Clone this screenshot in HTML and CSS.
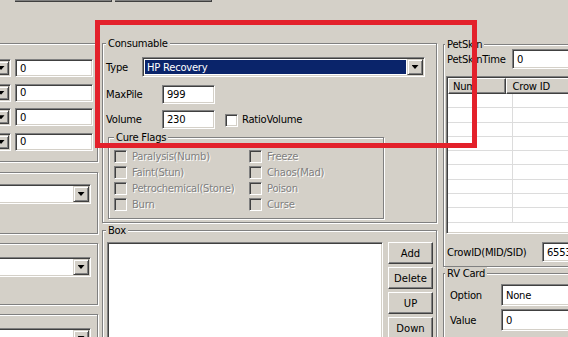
FILE: index.html
```html
<!DOCTYPE html>
<html lang="en">
<head>
	<meta charset="UTF-8">
	<title>Item Editor - Consumable</title>
	<link rel="stylesheet" href="styles.css">
</head>
<body>
	<div class="toolbar">
		<div class="tool-btn"></div>
		<div class="tool-btn"></div>
	</div>

	<div class="editor">
		<div class="col col-left">
			<div class="group group-stats">
				<div class="stat-row"><div class="combo combo-stub"><span class="combo-field"></span><span class="combo-btn"></span></div><div class="edit edit-stat">0</div></div>
				<div class="stat-row"><div class="combo combo-stub"><span class="combo-field"></span><span class="combo-btn"></span></div><div class="edit edit-stat">0</div></div>
				<div class="stat-row"><div class="combo combo-stub"><span class="combo-field"></span><span class="combo-btn"></span></div><div class="edit edit-stat">0</div></div>
				<div class="stat-row"><div class="combo combo-stub"><span class="combo-field"></span><span class="combo-btn"></span></div><div class="edit edit-stat">0</div></div>
			</div>
			<div class="group group-pick pick-first">
				<div class="combo combo-pick"><span class="combo-field"></span><span class="combo-btn"></span></div>
			</div>
			<div class="group group-pick">
				<div class="combo combo-pick"><span class="combo-field"></span><span class="combo-btn"></span></div>
			</div>
			<div class="group group-pick pick-last">
				<div class="combo combo-pick"><span class="combo-field"></span><span class="combo-btn"></span></div>
			</div>
		</div>

		<div class="col col-mid">
			<div class="group group-consumable">
				<span class="legend">Consumable</span>
				<div class="field-row row-type">
					<span class="label label-type">Type</span>
					<div class="combo combo-type"><span class="combo-field selected">HP Recovery</span><span class="combo-btn"></span></div>
				</div>
				<div class="field-row row-num">
					<span class="label label-num">MaxPile</span>
					<div class="edit edit-num">999</div>
				</div>
				<div class="field-row row-num row-volume">
					<span class="label label-num">Volume</span>
					<div class="edit edit-num">230</div>
					<span class="check check-ratio"></span>
					<span class="label">RatioVolume</span>
				</div>

				<div class="group group-cure">
					<span class="legend">Cure Flags</span>
					<div class="cure-grid">
						<div class="cure-item"><span class="check off"></span><span class="disabled">Paralysis(Numb)</span></div>
						<div class="cure-item"><span class="check off"></span><span class="disabled">Faint(Stun)</span></div>
						<div class="cure-item"><span class="check off"></span><span class="disabled">Petrochemical(Stone)</span></div>
						<div class="cure-item"><span class="check off"></span><span class="disabled">Burn</span></div>
						<div class="cure-item"><span class="check off"></span><span class="disabled">Freeze</span></div>
						<div class="cure-item"><span class="check off"></span><span class="disabled">Chaos(Mad)</span></div>
						<div class="cure-item"><span class="check off"></span><span class="disabled">Poison</span></div>
						<div class="cure-item"><span class="check off"></span><span class="disabled">Curse</span></div>
					</div>
				</div>
			</div>

			<div class="group group-box">
				<span class="legend">Box</span>
				<div class="box-body">
					<div class="listbox"></div>
					<div class="box-buttons">
						<button class="btn">Add</button>
						<button class="btn">Delete</button>
						<button class="btn">UP</button>
						<button class="btn">Down</button>
					</div>
				</div>
			</div>
		</div>

		<div class="col col-right">
			<div class="group group-petskin">
				<span class="legend">PetSkin</span>
				<div class="field-row row-skintime">
					<span class="label label-skintime">PetSkinTime</span>
					<div class="edit edit-wide">0</div>
				</div>
				<div class="listview">
					<div class="lv-header">
						<span class="lv-col lv-num">Num</span>
						<span class="lv-col lv-crow">Crow ID</span>
					</div>
					<div class="lv-rows">
						<div class="lv-row"><span></span><span></span></div>
						<div class="lv-row"><span></span><span></span></div>
						<div class="lv-row"><span></span><span></span></div>
						<div class="lv-row"><span></span><span></span></div>
						<div class="lv-row"><span></span><span></span></div>
						<div class="lv-row"><span></span><span></span></div>
						<div class="lv-row"><span></span><span></span></div>
						<div class="lv-row"><span></span><span></span></div>
						<div class="lv-row"><span></span><span></span></div>
					</div>
				</div>
				<div class="field-row row-crow">
					<span class="label label-crow">CrowID(MID/SID)</span>
					<div class="edit edit-wide">65535</div>
				</div>
			</div>

			<div class="group group-rvcard">
				<span class="legend">RV Card</span>
				<div class="field-row row-rv row-option">
					<span class="label label-rv">Option</span>
					<div class="edit edit-rv">None</div>
				</div>
				<div class="field-row row-rv">
					<span class="label label-rv">Value</span>
					<div class="edit edit-rv">0</div>
				</div>
			</div>
		</div>
	</div>

	<div class="highlight"></div>
</body>
</html>
```

FILE: styles.css
```css
body {
	margin: 0;
	width: 568px;
	height: 337px;
	overflow: hidden;
	position: relative;
	background: #d4d0c8;
	color: #000;
	font-family: "DejaVu Sans", sans-serif;
	font-size: 10px;
	letter-spacing: -0.25px;
}

/* leftover buttons from the row above */
.toolbar {
	display: flex;
	align-items: flex-end;
	gap: 3px;
	height: 2px;
	padding-left: 15px;
	overflow: hidden;
}
.tool-btn {
	flex: none;
	width: 97px;
	height: 20px;
	box-sizing: border-box;
	border-right: 1px solid #404040;
	border-bottom: 1px solid #404040;
	box-shadow: inset -1px -1px 0 #808080;
}

.editor {
	display: flex;
	align-items: flex-start;
	margin-top: 41px;
}
.col {
	flex: none;
}
.col-left {
	width: 98px;
}
.col-mid {
	width: 335px;
	margin-left: 4px;
}
.col-right {
	width: 200px;
	margin-left: 6px;
	margin-top: 1px;
}

/* etched group box */
.group {
	box-sizing: border-box;
	border: 1px solid #808080;
	box-shadow: inset 1px 1px 0 #fff, 1px 1px 0 #fff;
}
.legend {
	display: block;
	width: fit-content;
	margin: -7px 0 0 3px;
	padding: 0 2px;
	line-height: 13px;
	background: #d4d0c8;
}

/* sunken edit */
.edit {
	box-sizing: border-box;
	border: 1px solid;
	border-color: #808080 #fff #fff #808080;
	box-shadow: inset 1px 1px 0 #404040, inset -1px -1px 0 #d4d0c8;
	background: #fff;
	padding-left: 4px;
	display: flex;
	align-items: center;
	white-space: nowrap;
	overflow: hidden;
}

/* combo box */
.combo {
	box-sizing: border-box;
	display: flex;
	padding: 1px;
	border: 1px solid;
	border-color: #808080 #fff #fff #808080;
	box-shadow: inset 1px 1px 0 #404040, inset -1px -1px 0 #d4d0c8;
	background: #fff;
}
.combo-field {
	flex: 1;
	display: flex;
	align-items: center;
	padding-left: 3px;
	white-space: nowrap;
}
.combo-field.selected {
	margin: 1px;
	padding-left: 2px;
	background: #0a246a;
	color: #fff;
}
.combo-btn {
	flex: none;
	width: 16px;
	box-sizing: border-box;
	display: flex;
	align-items: center;
	justify-content: center;
	background: #d4d0c8;
	border: 1px solid;
	border-color: #d4d0c8 #404040 #404040 #d4d0c8;
	box-shadow: inset 1px 1px 0 #fff, inset -1px -1px 0 #808080;
}
.combo-btn::after {
	content: "";
	width: 7px;
	height: 4px;
	background: #000;
	clip-path: polygon(0 0, 100% 0, 50% 100%);
}

.check {
	flex: none;
	width: 13px;
	height: 13px;
	box-sizing: border-box;
	border: 1px solid;
	border-color: #808080 #fff #fff #808080;
	box-shadow: inset 1px 1px 0 #404040, inset -1px -1px 0 #d4d0c8;
	background: #fff;
}
.check.off {
	background: #d4d0c8;
}

.btn {
	display: block;
	box-sizing: border-box;
	width: 45px;
	height: 22px;
	padding: 0;
	font: inherit;
	color: #000;
	background: #d4d0c8;
	border: 1px solid;
	border-color: #fff #404040 #404040 #fff;
	box-shadow: inset -1px -1px 0 #808080;
}

.field-row {
	display: flex;
	align-items: center;
	white-space: nowrap;
}
.label {
	flex: none;
}

/* left column */
.col-left .group {
	margin-left: -30px;
}
.group-stats {
	height: 119px;
	padding-top: 15px;
	display: flex;
	flex-direction: column;
	gap: 6.67px;
}
.stat-row {
	display: flex;
	justify-content: flex-end;
	gap: 4px;
	padding-right: 4px;
	height: 18px;
}
.combo-stub {
	width: 40px;
}
.edit-stat {
	width: 78px;
}
.group-pick {
	height: 62px;
	margin-top: 9px;
	padding: 13px 6px 0 0;
	display: flex;
	justify-content: flex-end;
	align-items: flex-start;
}
.pick-first {
	margin-top: 10px;
	padding-top: 11px;
}
.pick-last {
	height: 100px;
}
.combo-pick {
	width: 110px;
	height: 20px;
}

/* consumable */
.group-consumable {
	height: 180px;
	padding-left: 3px;
}
.group-consumable > .legend {
	margin-left: 0;
}
.row-type {
	height: 20px;
	margin-top: 7px;
}
.label-type {
	width: 36px;
}
.combo-type {
	width: 283px;
	height: 20px;
}
.row-num {
	height: 19px;
	margin-top: 8px;
}
.row-volume {
	margin-top: 6px;
}
.label-num {
	width: 56px;
}
.edit-num {
	width: 53px;
	height: 19px;
}
.check-ratio {
	align-self: flex-start;
	margin: 4px 4px 0 10px;
}

.group-cure {
	width: 276px;
	height: 82px;
	margin: 8px 0 0 2px;
}
.group-cure .legend {
	margin-left: 5px;
}
.cure-grid {
	display: grid;
	grid-template-columns: 135px auto;
	grid-template-rows: repeat(4, 16px);
	grid-auto-flow: column;
	margin-top: 4px;
	padding-left: 5px;
}
.cure-item {
	display: flex;
	align-items: center;
	gap: 5px;
}
.disabled {
	color: #808080;
	text-shadow: 1px 1px 0 #fff;
}

/* box */
.group-box {
	height: 140px;
	margin-top: 7px;
}
.box-body {
	display: flex;
	gap: 5px;
	margin-top: 5px;
	padding-left: 4px;
}
.listbox {
	width: 276px;
	height: 120px;
	box-sizing: border-box;
	border: 1px solid;
	border-color: #808080 #fff #fff #808080;
	box-shadow: inset 1px 1px 0 #404040, inset -1px -1px 0 #d4d0c8;
	background: #fff;
}
.box-buttons {
	display: flex;
	flex-direction: column;
	gap: 3px;
}

/* right column */
.col-right .legend {
	margin-left: 1px;
}
.group-petskin {
	height: 223px;
}
.row-skintime {
	height: 20px;
	margin-top: -2px;
	padding-left: 3px;
}
.label-skintime {
	width: 65px;
}
.edit-wide {
	width: 100px;
	height: 20px;
}
.listview {
	width: 150px;
	height: 158px;
	margin: 7px 0 0 2px;
	box-sizing: border-box;
	border: 1px solid;
	border-color: #808080 #fff #fff #808080;
	box-shadow: inset 1px 1px 0 #404040, inset -1px -1px 0 #d4d0c8;
	background: #fff;
	padding: 1px;
	overflow: hidden;
}
.lv-header {
	display: flex;
	height: 16px;
}
.lv-col {
	box-sizing: border-box;
	display: flex;
	align-items: center;
	background: #d4d0c8;
	border: 1px solid;
	border-color: #fff #404040 #404040 #fff;
	box-shadow: inset -1px -1px 0 #808080;
}
.lv-num {
	width: 65px;
	padding-left: 4px;
}
.lv-crow {
	width: 100px;
	padding-left: 6px;
}
.lv-row {
	display: flex;
	height: 14.3px;
	box-sizing: border-box;
	border-bottom: 1px solid #dcdcdc;
}
.lv-row span:first-child {
	width: 65px;
	border-right: 1px solid #dcdcdc;
	box-sizing: border-box;
}
.row-crow {
	height: 20px;
	margin-top: 8px;
	padding-left: 3px;
}
.label-crow {
	width: 95px;
}

.group-rvcard {
	height: 80px;
	margin-top: 6px;
}
.row-rv {
	height: 22px;
	margin-top: 3px;
	padding-left: 6px;
}
.row-option {
	margin-top: 4px;
}
.label-rv {
	width: 51px;
}
.edit-rv {
	width: 100px;
	height: 22px;
}

/* red annotation frame drawn over the screenshot */
.highlight {
	position: absolute;
	left: 95px;
	top: 20px;
	width: 382px;
	height: 128px;
	box-sizing: border-box;
	border: 5px solid #e3212b;
}
```
